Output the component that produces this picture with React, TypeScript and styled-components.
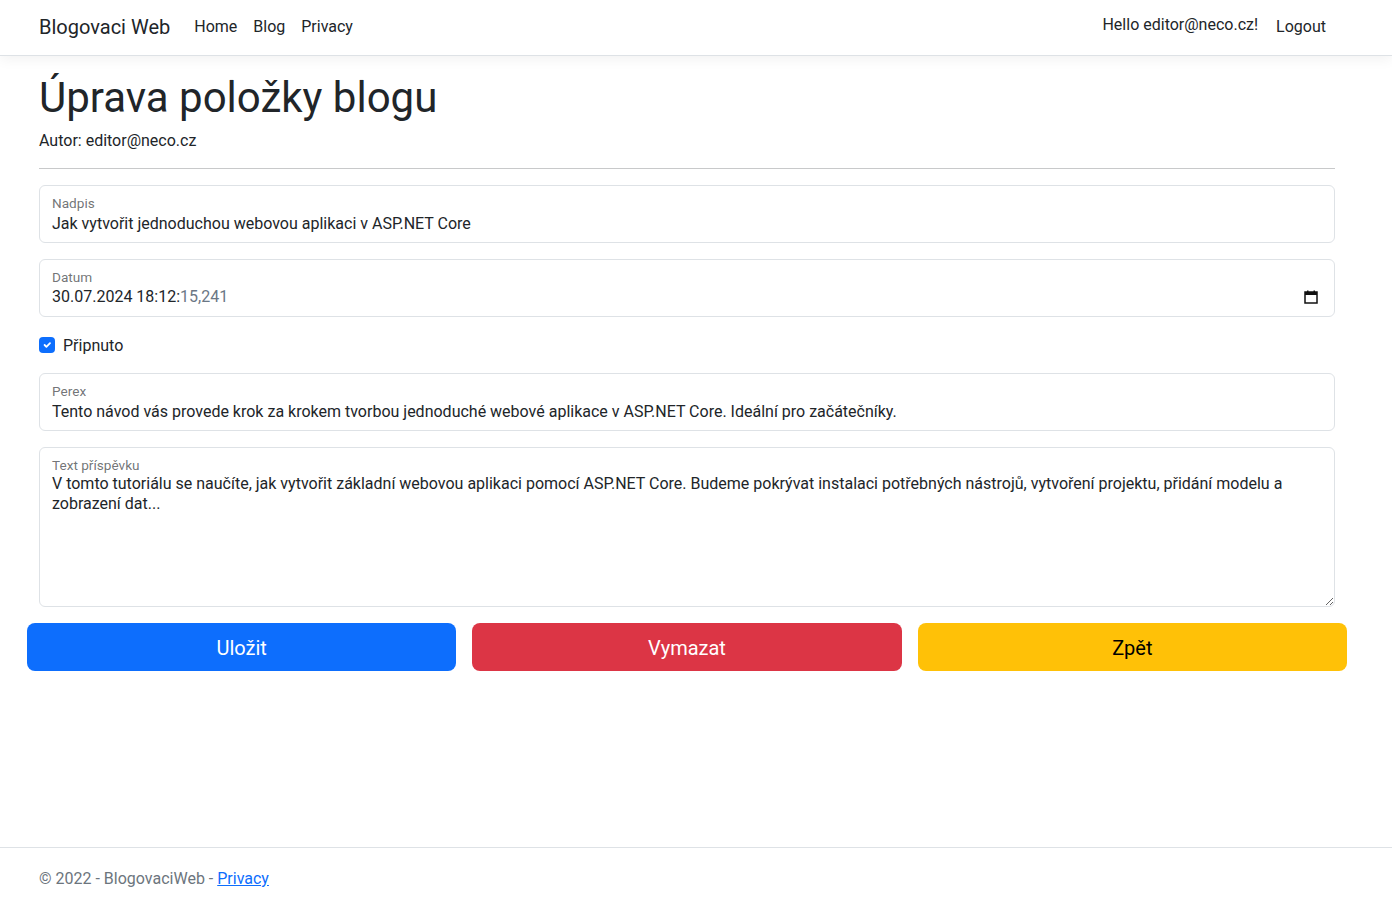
import React from "react";
import styled, { createGlobalStyle } from "styled-components";

const FONT = `Roboto, "Segoe UI", "Noto Sans", sans-serif`;

const GlobalStyle = createGlobalStyle`
  html, body { margin: 0; padding: 0; }
  body {
    font-family: ${FONT};
    font-size: 16px;
    color: #212529;
    background: #fff;
  }
  * { box-sizing: border-box; }
`;

const Page = styled.div`
  min-height: 100vh;
  display: flex;
  flex-direction: column;
`;

const Navbar = styled.nav`
  height: 56px;
  border-bottom: 1px solid #dee2e6;
  box-shadow: 0 4px 12px rgba(0, 0, 0, 0.05);
  display: flex;
  align-items: center;
  padding: 0 58px 2px 39px;
`;

const Brand = styled.a`
  font-size: 20px;
  line-height: 30px;
  color: #212529;
  text-decoration: none;
  margin-right: 16px;
`;

const NavLinks = styled.div`
  display: flex;
  flex: 1;
`;

const NavLink = styled.a`
  padding: 8px;
  line-height: 24px;
  color: #212529;
  text-decoration: none;
`;

const UserArea = styled.div`
  display: flex;
  align-items: center;
  gap: 2px;
`;

const UserItem = styled.span<{ $lift?: boolean }>`
  padding: 8px;
  line-height: 24px;
  margin-top: ${(p) => (p.$lift ? "-3px" : "0")};
`;

const Main = styled.main`
  width: 1296px;
  margin: 16px 0 0 39px;
`;

const Title = styled.h1`
  font-size: 42px;
  line-height: 48px;
  font-weight: 400;
  margin: 2px 0 6px;
`;

const Author = styled.p`
  margin: 0 0 16px;
  line-height: 24px;
  padding-top: 1px;
  height: 24px;
`;

const Rule = styled.hr`
  margin: 16px 0;
  border: 0;
  border-top: 1px solid #c8c9ca;
`;

const Form = styled.form`
  display: flex;
  flex-direction: column;
  gap: 16px;
`;

const Floating = styled.div<{ $tall?: boolean }>`
  position: relative;
  height: ${(p) => (p.$tall ? "160px" : "58px")};
`;

const FloatLabel = styled.label`
  position: absolute;
  top: 9px;
  left: 13px;
  font-size: 13.6px;
  line-height: 18px;
  color: rgba(33, 37, 41, 0.65);
  pointer-events: none;
`;

const Input = styled.input`
  width: 100%;
  height: 100%;
  border: 1px solid #dee2e6;
  border-radius: 6px;
  padding: 27px 12px 9px;
  font: inherit;
  line-height: 24px;
  color: #212529;
  outline: none;
`;

const FakeInput = styled.div`
  width: 100%;
  height: 100%;
  border: 1px solid #dee2e6;
  border-radius: 6px;
  padding: 27px 16px 9px 12px;
  line-height: 24px;
  display: flex;
  align-items: center;
  justify-content: space-between;
`;

const Muted = styled.span`
  color: #6b7785;
`;

const TextArea = styled.textarea`
  width: 100%;
  height: 100%;
  border: 1px solid #dee2e6;
  border-radius: 6px;
  padding: 26px 12px 10px;
  font: inherit;
  line-height: 20px;
  color: #212529;
  resize: vertical;
  outline: none;
  display: block;
`;

const CheckRow = styled.div`
  display: flex;
  align-items: center;
  height: 24px;
  gap: 8px;
`;

const CheckBox = styled.span`
  width: 16px;
  height: 16px;
  border-radius: 4px;
  background: #0d6efd;
  display: flex;
  align-items: center;
  justify-content: center;
`;

const Buttons = styled.div`
  display: grid;
  grid-template-columns: repeat(3, 1fr);
  gap: 16px;
  margin: 0 -12px;
`;

const Btn = styled.button<{ $bg: string; $fg: string }>`
  height: 48px;
  border: 0;
  border-radius: 8px;
  background: ${(p) => p.$bg};
  color: ${(p) => p.$fg};
  font: inherit;
  font-size: 20px;
  line-height: 30px;
  padding-top: 2px;
`;

const Footer = styled.footer`
  margin-top: auto;
  border-top: 1px solid #dee2e6;
  height: 57px;
  padding: 19px 0 0 39px;
  line-height: 24px;
  color: #6c757d;
  a { color: #0d6efd; }
`;

const CalIcon = () => (
  <svg width="14" height="14" viewBox="0 0 14 14">
    <rect x="1" y="2" width="12" height="11" fill="none" stroke="#111" strokeWidth="1.5" />
    <rect x="1" y="2" width="12" height="3" fill="#111" />
    <rect x="3" y="0.5" width="1.5" height="2" fill="#111" />
    <rect x="9.5" y="0.5" width="1.5" height="2" fill="#111" />
  </svg>
);

const perex =
  "Tento návod vás provede krok za krokem tvorbou jednoduché webové aplikace v ASP.NET Core. Ideální pro začátečníky.";

export default function App() {
  return (
    <Page>
      <GlobalStyle />
      <Navbar>
        <Brand href="#">Blogovaci Web</Brand>
        <NavLinks>
          <NavLink href="#">Home</NavLink>
          <NavLink href="#">Blog</NavLink>
          <NavLink href="#">Privacy</NavLink>
        </NavLinks>
        <UserArea>
          <UserItem $lift>Hello editor@neco.cz!</UserItem>
          <UserItem>Logout</UserItem>
        </UserArea>
      </Navbar>
      <Main>
        <Title>Úprava položky blogu</Title>
        <Author>Autor: editor@neco.cz</Author>
        <Rule />
        <Form onSubmit={(e) => e.preventDefault()}>
          <Floating>
            <Input readOnly value="Jak vytvořit jednoduchou webovou aplikaci v ASP.NET Core" />
            <FloatLabel>Nadpis</FloatLabel>
          </Floating>
          <Floating>
            <FakeInput>
              <span>
                30.07.2024 18:12:<Muted>15,241</Muted>
              </span>
              <CalIcon />
            </FakeInput>
            <FloatLabel>Datum</FloatLabel>
          </Floating>
          <CheckRow>
            <CheckBox>
              <svg width="12" height="12" viewBox="0 0 20 20">
                <path d="M6 10l3 3 6-6" fill="none" stroke="#fff" strokeWidth="3" strokeLinecap="round" strokeLinejoin="round" />
              </svg>
            </CheckBox>
            <span>Připnuto</span>
          </CheckRow>
          <Floating>
            <Input readOnly value={perex} />
            <FloatLabel>Perex</FloatLabel>
          </Floating>
          <Floating $tall>
            <TextArea
              readOnly
              value="V tomto tutoriálu se naučíte, jak vytvořit základní webovou aplikaci pomocí ASP.NET Core. Budeme pokrývat instalaci potřebných nástrojů, vytvoření projektu, přidání modelu a zobrazení dat..."
            />
            <FloatLabel>Text příspěvku</FloatLabel>
          </Floating>
          <Buttons>
            <Btn $bg="#0d6efd" $fg="#fff">Uložit</Btn>
            <Btn $bg="#dc3545" $fg="#fff">Vymazat</Btn>
            <Btn $bg="#ffc107" $fg="#000">Zpět</Btn>
          </Buttons>
        </Form>
      </Main>
      <Footer>
        © 2022 - BlogovaciWeb - <a href="#">Privacy</a>
      </Footer>
    </Page>
  );
}
